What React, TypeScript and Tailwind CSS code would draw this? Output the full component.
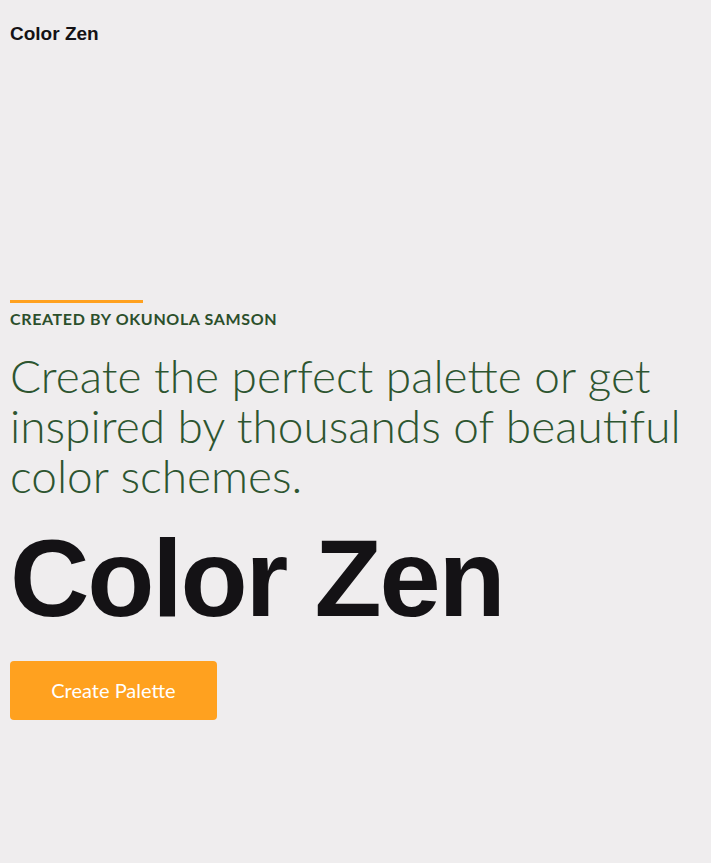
import React from "react";

const App = () => {
  return (
    <div className="min-h-screen bg-[#efedee] font-['Liberation_Sans',Arial,sans-serif]">
      {/* Header */}
      <header className="px-[10px] pt-[20px]">
        <span className="text-[19px] font-bold text-[#141215]">Color Zen</span>
      </header>

      {/* Hero */}
      <main className="px-[10px] pt-[251px]">
        <div className="w-[133px] h-[3px] bg-[#ffa11f]" />
        <p className="mt-[4px] text-[16px] font-bold uppercase tracking-[0.04em] text-[#2b4f2b] font-['Lato',sans-serif]">
          Created by Okunola Samson
        </p>
        <h2 className="mt-[20px] w-[700px] text-[46px] leading-[50px] font-light text-[#2d5530] font-['Lato',sans-serif]">
          Create the perfect palette or get inspired by thousands of beautiful color schemes.
        </h2>
        <h1 className="mt-[16px] text-[110px] leading-[1.1] font-bold tracking-[-0.02em] text-[#141215]">
          Color Zen
        </h1>
        <button className="mt-[23px] w-[207px] h-[59px] rounded-[4px] bg-[#ffa11f] text-white text-[20px] font-['Lato',sans-serif]">
          Create Palette
        </button>
      </main>
    </div>
  );
};

export default App;
